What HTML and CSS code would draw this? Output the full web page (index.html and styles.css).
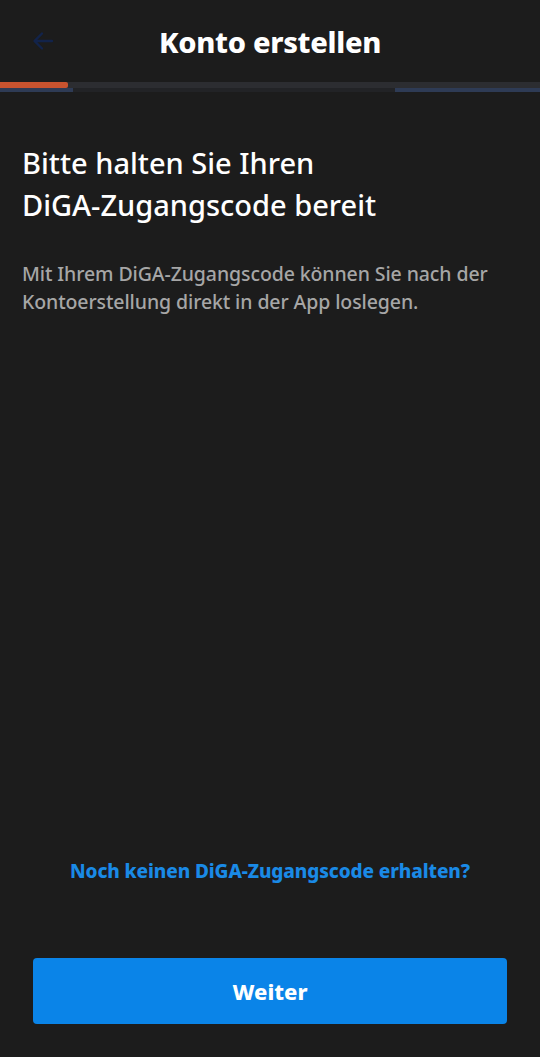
FILE: index.html
```html
<!DOCTYPE html>
<html lang="de">
<head>
<meta charset="utf-8">
<title>Konto erstellen</title>
<link rel="stylesheet" href="styles.css">
</head>
<body>
<div class="screen">
  <header class="topbar">
    <button class="back" aria-label="Zurück">
      <svg width="24" height="24" viewBox="0 0 24 24"><path d="M21 12H4M11 4.5L3.5 12l7.5 7.5" fill="none" stroke="#12234a" stroke-width="2.4" stroke-linecap="round" stroke-linejoin="round"/></svg>
    </button>
    <h1 class="title">Konto erstellen</h1>
  </header>
  <div class="progress">
    <div class="track"><div class="fill"></div></div>
    <div class="subtrack"><div class="seg seg-left"></div><div class="seg-gap"></div><div class="seg seg-right"></div></div>
  </div>
  <main class="content">
    <h2 class="heading">Bitte halten Sie Ihren<br>DiGA-Zugangscode bereit</h2>
    <p class="text">Mit Ihrem DiGA-Zugangscode können Sie nach der Kontoerstellung direkt in der App loslegen.</p>
  </main>
  <div class="bottom">
    <a class="link" href="#">Noch keinen DiGA-Zugangscode erhalten?</a>
    <button class="primary">Weiter</button>
  </div>
</div>
</body>
</html>
```
FILE: styles.css
```css
html, body {
  margin: 0;
  padding: 0;
  background: #1c1c1c;
}
.screen {
  width: 540px;
  height: 1057px;
  display: flex;
  flex-direction: column;
  font-family: "Noto Sans", "Open Sans", sans-serif;
  color: #ffffff;
  background: #1c1c1c;
}
.topbar {
  height: 82px;
  display: flex;
  align-items: center;
  justify-content: center;
  position: relative;
}
.back {
  position: absolute;
  left: 31px;
  top: 29px;
  width: 24px;
  height: 24px;
  padding: 0;
  border: 0;
  background: none;
  display: flex;
  align-items: center;
  justify-content: center;
}
.title {
  margin: 0;
  font-size: 29px;
  font-weight: 800;
  letter-spacing: -0.3px;
}
.progress {
  display: flex;
  flex-direction: column;
}
.track {
  height: 6px;
  background: #2c2d31;
}
.fill {
  width: 68px;
  height: 6px;
  background: #c8532f;
  border-radius: 0 2px 2px 0;
}
.subtrack {
  height: 4px;
  display: flex;
  background: #222326;
}
.seg {
  height: 4px;
  background: #2e3b55;
}
.seg-left { width: 73px; }
.seg-gap { flex: 1; }
.seg-right { width: 145px; }
.content {
  flex: 1;
  padding: 50px 22px 0;
}
.heading {
  margin: 0;
  font-size: 29px;
  line-height: 42px;
  font-weight: 500;
  color: #ffffff;
}
.text {
  margin: 34px 0 0;
  font-size: 19.5px;
  line-height: 28px;
  font-weight: 500;
  color: #a6a6a6;
  letter-spacing: -0.1px;
}
.bottom {
  display: flex;
  flex-direction: column;
  align-items: center;
  padding: 0 33px 33px;
}
.link {
  font-size: 19px;
  line-height: 24px;
  font-weight: 800;
  color: #1a8ae6;
  text-decoration: none;
  letter-spacing: -0.1px;
}
.primary {
  margin-top: 75px;
  width: 474px;
  height: 66px;
  border: 0;
  border-radius: 4px;
  background: #0a84e8;
  color: #ffffff;
  font-family: "Noto Sans", "Open Sans", sans-serif;
  font-size: 22px;
  font-weight: 800;
}
```
